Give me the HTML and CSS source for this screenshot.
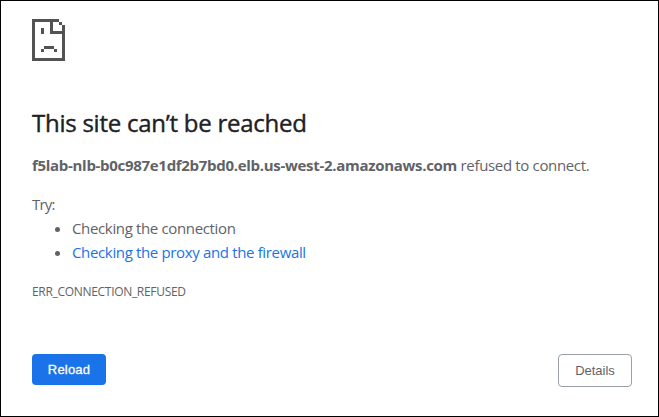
FILE: index.html
```html
<!DOCTYPE html>
<html lang="en">
<head>
<meta charset="utf-8">
<title>Site can’t be reached</title>
<link rel="stylesheet" href="styles.css">
</head>
<body>
<main class="page">
  <svg class="icon" width="33" height="42" viewBox="0 0 33 42" shape-rendering="crispEdges" aria-hidden="true">
    <path fill="#535353" d="M0 0h27v3h3v3h3v36H0zM3 3v36h27V15H18V3zM21 3v9h9V6h-3V3zM9 9h3v6H9zM12 27h10v3H12zM9 30h3v3H9zM22 30h3v3h-3z" fill-rule="evenodd"/>
  </svg>
  <h1>This site can’t be reached</h1>
  <p class="summary"><strong>f5lab-nlb-b0c987e1df2b7bd0.elb.us-west-2.amazonaws.com</strong> refused to connect.</p>
  <p class="try">Try:</p>
  <ul>
    <li>Checking the connection</li>
    <li><a>Checking the proxy and the firewall</a></li>
  </ul>
  <p class="code">ERR_CONNECTION_REFUSED</p>
  <div class="buttons">
    <button class="reload">Reload</button>
    <button class="details">Details</button>
  </div>
</main>
</body>
</html>
```
FILE: styles.css
```css
* { box-sizing: border-box; }
body {
  margin: 0;
  background: #fff;
  color: #5f6368;
  font: 15px/24px "Open Sans", sans-serif;
}
.page {
  height: 417px;
  padding: 18px 26px 0 31px;
  border: 1px solid #000;
  white-space: nowrap;
}
.icon { display: block; }
h1 {
  margin: 47px 0 0;
  color: #202124;
  font-size: 24px;
  font-weight: 500;
  line-height: 30px;
  letter-spacing: -0.25px;
  -webkit-text-stroke: 0.4px #202124;
}
.summary { margin: 15px 0 0; letter-spacing: -0.34px; }
.summary strong { font-weight: 700; letter-spacing: -0.3px; }
.try { margin: 15px 0 0; letter-spacing: -0.8px; }
ul { margin: 0; padding: 0 0 0 40px; letter-spacing: -0.35px; }
a { color: #1a73e8; }
.code { margin: 16px 0 0; font-size: 12px; letter-spacing: -0.31px; }
.buttons {
  display: flex;
  justify-content: space-between;
  align-items: flex-start;
  margin-top: 50px;
}
button {
  width: 74px;
  padding: 0;
  border-radius: 4px;
  font: 13px/20px "Liberation Sans", Arial, sans-serif;
}
.reload {
  height: 31px;
  border: 0;
  background: #1a73e8;
  color: #fff;
  letter-spacing: 0.2px;
  -webkit-text-stroke: 0.3px #fff;
}
.details {
  height: 33px;
  border: 1px solid #9aa0a6;
  background: #fff;
  color: #5f6368;
}
```
